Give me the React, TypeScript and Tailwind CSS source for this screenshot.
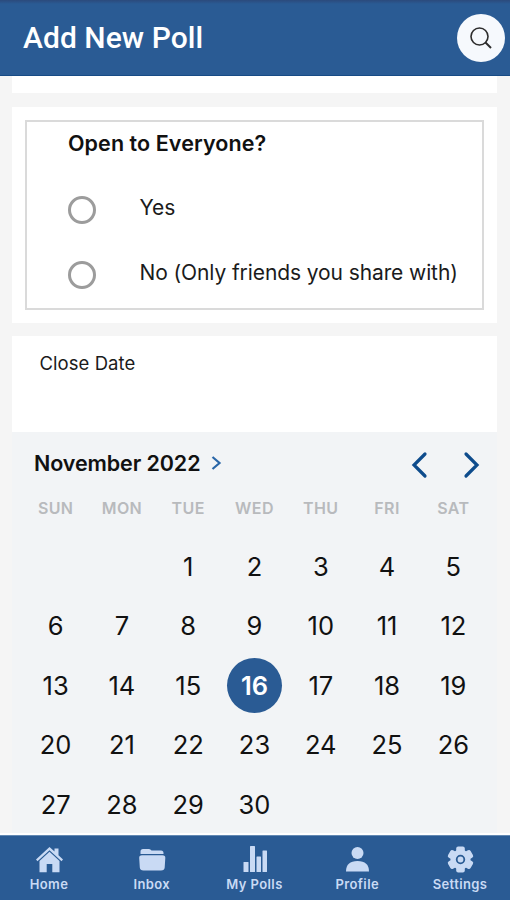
import type {ReactNode} from 'react'

const weekdays = ['SUN', 'MON', 'TUE', 'WED', 'THU', 'FRI', 'SAT']
const leadingBlanks = 2
const daysInMonth = 30
const selectedDay = 16

interface NavItemProps {
    label: string
    children: ReactNode
}

const NavItem = ({label, children}: NavItemProps) => {
    return (
        <button className="flex w-[102.75px] shrink-0 flex-col items-center pt-[10px]">
            <svg className="mr-px" width="28" height="28" viewBox="0 0 28 28" fill="currentColor">{children}</svg>
            <span className="mt-[2px] mr-px text-[13px] leading-4 font-semibold tracking-[0.4px] whitespace-nowrap">{label}</span>
        </button>
    )
}

const RadioOption = ({label}: {label: string}) => {
    return (
        <label className="flex h-[65px] items-center">
            <span className="mb-px h-7 w-7 shrink-0 rounded-full border-3 border-[#9c9c9c]" />
            <span className="mb-[5px] ml-[43.5px] text-[21px] leading-7 tracking-[-0.1px] whitespace-nowrap text-[#1b1b1b]">{label}</span>
        </label>
    )
}

const Calendar = () => {
    const cells = [
        ...Array.from({length: leadingBlanks}, () => null),
        ...Array.from({length: daysInMonth}, (_, i) => i + 1),
    ]

    return (
        <section className="h-[401px] bg-[#f2f4f6] pl-[10.5px]">
            <div className="flex h-[63px] items-center pl-[11.5px]">
                <h2 className="mb-px text-[21.5px] font-semibold tracking-[-0.1px] text-[#111111]">November 2022</h2>
                <svg className="mb-[2px] ml-[10px]" width="12" height="18" viewBox="0 0 12 18" fill="none" stroke="#2966a8" strokeWidth="2.2">
                    <path d="M2.5 3l7 6-7 6" />
                </svg>
                <div className="mt-[2px] ml-auto flex gap-[35px] pr-[17px] text-[#0e4c8c]">
                    <svg width="17" height="28" viewBox="0 0 17 28" fill="none" stroke="currentColor" strokeWidth="3.2" strokeLinecap="round">
                        <path d="M14 3L3 14l11 11" />
                    </svg>
                    <svg width="17" height="28" viewBox="0 0 17 28" fill="none" stroke="currentColor" strokeWidth="3.2" strokeLinecap="round">
                        <path d="M3 3l11 11L3 25" />
                    </svg>
                </div>
            </div>
            <div className="grid w-[464px] grid-cols-7 text-center text-[16px] leading-[26px] font-semibold tracking-[0.4px] text-[#b8babd]">
                {weekdays.map((day) => <span key={day}>{day}</span>)}
            </div>
            <div className="mt-[16.5px] grid w-[464px] auto-rows-[59.4px] grid-cols-7 place-items-center text-[25.5px] text-[#111111]">
                {cells.map((day, i) => (
                    <span
                        key={i}
                        className={day === selectedDay
                            ? 'flex h-[55px] w-[55px] items-center justify-center rounded-full bg-[#2a5b94] font-semibold text-white'
                            : ''}
                    >
                        {day}
                    </span>
                ))}
            </div>
        </section>
    )
}

export default function App() {
    return (
        <div className="flex h-[900px] w-[510px] flex-col overflow-hidden bg-[#f5f5f5] font-['Inter',sans-serif]">
            <header className="flex h-[76px] shrink-0 items-center justify-between border-b border-[#174b85] bg-[#2a5b94] bg-linear-to-b from-[#2b4a7c] to-[#2a5b94] to-[4px] pr-[5.5px] pl-[23px] font-['Roboto',sans-serif]">
                <h1 className="text-[30px] font-medium tracking-[0.05px] text-white">Add New Poll</h1>
                <button className="flex h-12 w-12 items-center justify-center rounded-full bg-[#f6f9fd]">
                    <svg width="24" height="24" viewBox="0 0 24 24" fill="none" stroke="#2d2d2d" strokeWidth="1.6">
                        <circle cx="10.5" cy="10.5" r="8.5" />
                        <path d="M16.5 16.5l5.5 5.5" strokeWidth="2" />
                    </svg>
                </button>
            </header>

            <main className="h-[759px] shrink-0 overflow-hidden pr-[13px] pl-[12px]">
                <div className="h-[17px] bg-white" />

                <section className="mt-[14px] h-[216px] bg-white px-[13px] pt-[13px]">
                    <div className="h-[190px] border-2 border-[#dadada] pl-[41px]">
                        <h2 className="mt-[6px] mb-[20px] text-[21.5px] leading-[30px] font-semibold tracking-[0.08px] text-[#111111]">Open to Everyone?</h2>
                        <RadioOption label="Yes" />
                        <RadioOption label="No (Only friends you share with)" />
                    </div>
                </section>

                <section className="mt-[13px] h-[96px] bg-white pt-[15px] pl-[27.5px] text-[18.5px] leading-6 tracking-[0.05px] text-[#1b1b1b]">
                    Close Date
                </section>

                <Calendar />
                <div className="-mr-[13px] -ml-[12px] h-[2px] bg-white" />
            </main>

            <nav className="flex h-[65px] shrink-0 justify-center border-t border-[#6389b3] bg-[#2a5b94] text-[#c9daf4]">
                <NavItem label="Home">
                    <path d="M14.5 1L19.5 5.5V2.5h4v6.8L28 13.5l-1.500 1.700L14.500 4.200 2.500 15.200 1 13.500z" />
                    <path d="M14.5 5.8L4.500 15V26.300h7.200v-8.300h5.600v8.300h7.200V15z" />
                </NavItem>
                <NavItem label="Inbox">
                    <path d="M2.5 8V5.500Q2.500 3 5 3h6q1.500 0 2.500 1.500H23q2.500 0 2.500 2.500v1z" />
                    <path d="M4 9.2h20.5Q27.500 9.200 27.300 12l-.6 9.500Q26.500 24.500 23 24.500H5.500Q2 24.500 1.800 21.500L1.200 12Q1 9.200 4 9.200z" />
                </NavItem>
                <NavItem label="My Polls">
                    <rect x="2.5" y="16" width="5" height="10" rx="0.5" />
                    <rect x="9" y="0" width="5" height="26" rx="0.5" />
                    <rect x="15.5" y="10.5" width="4.5" height="15.5" rx="0.5" />
                    <rect x="21.5" y="4.5" width="4.5" height="21.5" rx="0.5" />
                </NavItem>
                <NavItem label="Profile">
                    <circle cx="14.5" cy="7" r="6" />
                    <path d="M3 25.500Q3 15 14.500 15T26 25.500z" />
                </NavItem>
                <NavItem label="Settings">
                    {/* three crossed bars make the six teeth of the gear */}
                    <rect x="10.2" y="0.500" width="8.600" height="26" rx="2" />
                    <rect x="10.2" y="0.500" width="8.600" height="26" rx="2" transform="rotate(60 14.5 13.5)" />
                    <rect x="10.2" y="0.500" width="8.600" height="26" rx="2" transform="rotate(120 14.5 13.5)" />
                    <circle cx="14.5" cy="13.5" r="10" />
                    <circle cx="14.5" cy="13.5" r="3.8" fill="none" stroke="#2a5b94" strokeWidth="1.8" />
                </NavItem>
            </nav>
        </div>
    )
}
